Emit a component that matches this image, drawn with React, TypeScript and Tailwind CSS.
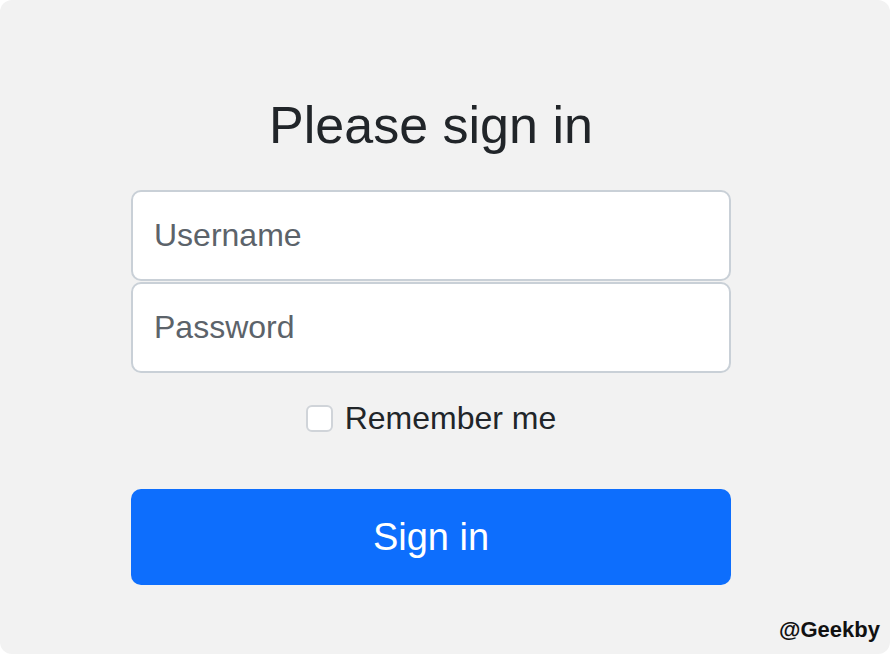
import { useState } from "react";

export default function App() {
  const [remember, setRemember] = useState(false);

  return (
    <div className="w-[890px] h-[654px] bg-white" style={{ fontFamily: '"Liberation Sans", Arial, sans-serif' }}>
      <div className="relative w-full h-full rounded-[12px] bg-[#f2f2f2] overflow-hidden">
        <form
          className="w-[600px] ml-[131px] pt-[94px] flex flex-col"
          onSubmit={(e) => e.preventDefault()}
        >
          <h1 className="text-center text-[52px] leading-[62px] font-normal text-[#212529] mb-[34px]">
            Please sign in
          </h1>

          <input
            type="text"
            placeholder="Username"
            className="h-[91px] w-full rounded-[10px] border-2 border-[#c9d0d7] bg-white px-[21px] text-[32px] text-[#212529] placeholder:text-[#5c636a] outline-none"
          />
          <input
            type="password"
            placeholder="Password"
            className="mt-[1px] h-[91px] w-full rounded-[10px] border-2 border-[#c9d0d7] bg-white px-[21px] text-[32px] text-[#212529] placeholder:text-[#5c636a] outline-none"
          />

          <label className="mt-[31px] h-[28px] flex items-center justify-center gap-[12px] cursor-pointer select-none">
            <input
              type="checkbox"
              checked={remember}
              onChange={(e) => setRemember(e.target.checked)}
              className="appearance-none w-[27px] h-[27px] rounded-[6px] border-2 border-[#d0d4d9] bg-white checked:bg-[#0d6efd] checked:border-[#0d6efd]"
            />
            <span className="text-[32px] leading-[28px] text-[#212529]">Remember me</span>
          </label>

          <button
            type="submit"
            className="mt-[57px] h-[96px] w-full rounded-[10px] bg-[#0d6efd] text-white text-[38px] leading-none"
          >
            Sign in
          </button>
        </form>

        <div className="absolute right-[10px] bottom-[9px] text-[22px] leading-[30px] font-bold text-[#111]">
          @Geekby
        </div>
      </div>
    </div>
  );
}
